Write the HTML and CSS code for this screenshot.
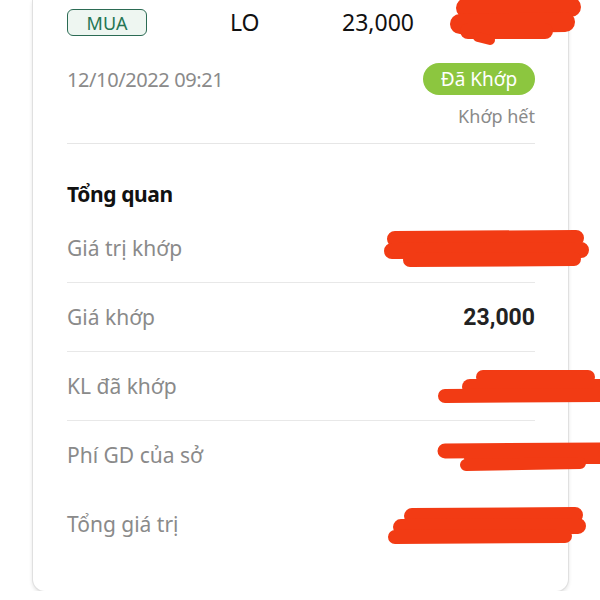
FILE: index.html
```html
<!DOCTYPE html>
<html lang="vi">
<head>
    <meta charset="UTF-8">
    <meta name="viewport" content="width=device-width, initial-scale=1.0">
    <title>Chi tiết lệnh</title>
    <link rel="stylesheet" href="styles.css">
</head>
<body>
    <div class="card">
        <div class="order-head">
            <span class="side-badge">MUA</span>
            <span class="order-type">LO</span>
            <span class="order-price">23,000</span>
        </div>

        <div class="order-meta">
            <span class="order-date">12/10/2022 09:21</span>
            <span class="status-pill">Đã Khớp</span>
        </div>
        <div class="fill-note">Khớp hết</div>

        <h2 class="section-title">Tổng quan</h2>

        <div class="row">
            <span class="row-label">Giá trị khớp</span>
            <span class="row-value"></span>
        </div>
        <div class="row">
            <span class="row-label">Giá khớp</span>
            <span class="row-value">23,000</span>
        </div>
        <div class="row">
            <span class="row-label">KL đã khớp</span>
            <span class="row-value"></span>
        </div>
        <div class="row plain">
            <span class="row-label">Phí GD của sở</span>
            <span class="row-value"></span>
        </div>
        <div class="row plain">
            <span class="row-label">Tổng giá trị</span>
            <span class="row-value"></span>
        </div>
    </div>

    <!-- hand-drawn redaction marks over the hidden values -->
    <svg class="scribbles" width="600" height="600" viewBox="0 0 600 600">
        <g fill="none" stroke="#f23b14" stroke-linecap="round">
            <path d="M466 8 L571 7" stroke-width="20"/>
            <path d="M460 24 L565 22" stroke-width="20"/>
            <path d="M468 31 L545 31" stroke-width="16"/>
            <path d="M478 37 L490 40" stroke-width="10"/>

            <path d="M395 239 L576 238" stroke-width="16"/>
            <path d="M392 251 L581 250" stroke-width="16"/>
            <path d="M410 260 L574 259" stroke-width="14"/>

            <path d="M483 377 L588 377" stroke-width="14"/>
            <path d="M470 387 L606 387" stroke-width="16"/>
            <path d="M445 396 L606 395" stroke-width="14"/>

            <path d="M445 451 L606 450" stroke-width="15"/>
            <path d="M470 458 L606 458" stroke-width="12"/>
            <path d="M466 465 L580 463" stroke-width="12"/>

            <path d="M412 516 L575 515" stroke-width="16"/>
            <path d="M401 527 L578 526" stroke-width="16"/>
            <path d="M395 537 L565 536" stroke-width="14"/>
        </g>
    </svg>
</body>
</html>
```

FILE: styles.css
```css
* {
    box-sizing: border-box;
}

body {
    margin: 0;
    background: #FFFFFF;
    font-family: "Noto Sans", "Open Sans", sans-serif;
    color: #111111;
}

.card {
    width: 535px;
    margin-left: 33px;
    padding: 9px 33px 32px 34px;
    background: #FFFFFF;
    border-radius: 0 0 12px 12px;
    box-shadow: 0 0 0 1px #E0E0E0, 0 2px 4px rgba(0, 0, 0, 0.16);
}

.order-head {
    display: grid;
    grid-template-columns: 163px 112px auto;
    align-items: center;
    height: 27px;
}

.side-badge {
    display: flex;
    align-items: center;
    justify-content: center;
    width: 80px;
    height: 27px;
    border: 1.5px solid #2B6B54;
    border-radius: 6px;
    background: #EEF6F1;
    color: #257553;
    font-size: 18px;
}

.order-type,
.order-price {
    font-size: 23px;
    line-height: 27px;
    color: #111111;
}

.order-meta {
    display: flex;
    justify-content: space-between;
    align-items: center;
    margin-top: 27px;
}

.order-date {
    font-size: 20px;
    color: #8A8A8A;
    letter-spacing: -0.4px;
}

.status-pill {
    display: flex;
    align-items: center;
    justify-content: center;
    width: 112px;
    height: 32px;
    border-radius: 16px;
    background: #8CC63F;
    color: #FFFFFF;
    font-size: 19px;
}

.fill-note {
    margin-top: 9px;
    padding-bottom: 15px;
    border-bottom: 1px solid #E6E6E6;
    text-align: right;
    font-size: 18px;
    line-height: 24px;
    color: #8A8A8A;
}

.section-title {
    margin: 36px 0 6px;
    font-size: 21px;
    line-height: 28px;
    font-weight: 700;
    letter-spacing: -0.4px;
    color: #111111;
}

.row {
    display: flex;
    justify-content: space-between;
    align-items: center;
    height: 69px;
    border-bottom: 1px solid #E8E8E8;
}

.row.plain {
    border-bottom-color: transparent;
}

.row-label {
    font-size: 21px;
    color: #8A8A8A;
}

.row-value {
    font-family: Roboto, "Noto Sans", sans-serif;
    font-size: 23px;
    font-weight: 700;
    color: #222222;
}

.scribbles {
    position: absolute;
    top: 0;
    left: 0;
    pointer-events: none;
}
```
